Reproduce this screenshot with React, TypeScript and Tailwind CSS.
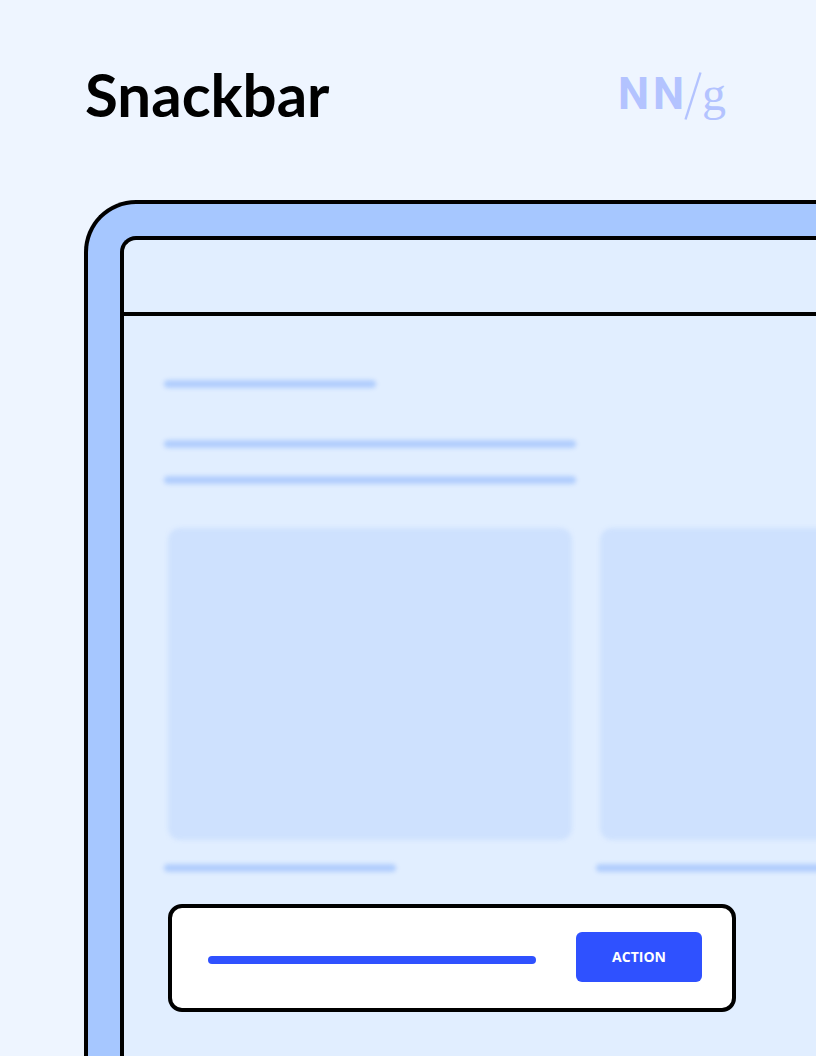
import { clsx } from "clsx";

const CARDS = [
  { id: "first", caption: "max-w-[232px]" },
  { id: "second", caption: "max-w-[412px]" },
];

function Line({ className }: { className?: string }) {
  return <div className={clsx("h-2 w-full rounded-full bg-[#b2cefd]", className)} />;
}

function Logo() {
  return (
    <div className="flex items-center text-[#b3c3ff]" aria-label="NN/g">
      <span className="flex gap-1 pb-1 font-['Roboto',sans-serif] text-[44px] leading-none font-bold">
        <span>N</span>
        <span>N</span>
      </span>
      <svg viewBox="0 0 18 48" className="h-12 w-[18px]" fill="none" aria-hidden="true">
        <path d="M1.5 47.5 16.5 .5" stroke="currentColor" strokeWidth="2.4" />
      </svg>
      <span className="pb-1 font-['Liberation_Serif',serif] text-5xl leading-none">g</span>
    </div>
  );
}

function Snackbar() {
  return (
    <div
      role="status"
      className="mx-1 mt-8 flex max-w-[568px] items-start gap-10 rounded-[14px] border-4 border-black bg-white pt-6 pr-[30px] pb-[26px] pl-9"
    >
      <div className="mt-6 h-2 flex-1 rounded-full bg-[#2f51ff]" />
      <button
        type="button"
        className="h-[50px] w-[126px] rounded-md bg-[#2f51ff] font-['Open_Sans',sans-serif] text-sm font-bold text-white"
      >
        ACTION
      </button>
    </div>
  );
}

export default function App() {
  return (
    <div className="flex min-h-screen flex-col overflow-hidden bg-[#eef5ff]">
      {/* ── Title ── */}
      <header className="flex h-[200px] items-center justify-between pr-[90px] pb-2 pl-[85px]">
        <h1 className="pb-1 font-['Lato',sans-serif] text-6xl leading-none font-bold text-black">Snackbar</h1>
        <Logo />
      </header>

      {/* ── Device frame, runs off the right and bottom edges ── */}
      <main className="ml-[84px] flex flex-1 flex-col rounded-tl-[52px] border-t-4 border-l-4 border-black bg-[#a6c7ff] pt-8 pl-8">
        <div className="flex flex-1 flex-col overflow-hidden rounded-tl-2xl border-t-4 border-l-4 border-black bg-[#e1eeff]">
          <div className="h-[76px] border-b-4 border-black" />

          <div className="px-10 pt-16 pb-11">
            {/* page content behind the snackbar */}
            <div className="-mr-12 blur-[2px]" aria-hidden="true">
              <Line className="max-w-[212px]" />
              <Line className="mt-[52px] max-w-[412px]" />
              <Line className="mt-7 max-w-[412px]" />
              <div className="mt-11 grid grid-cols-[412px_412px] gap-5">
                {CARDS.map(({ id, caption }) => (
                  <div key={id}>
                    <div className="mx-1 h-[312px] rounded-xl bg-[#cee1fe]" />
                    <Line className={clsx("mt-6", caption)} />
                  </div>
                ))}
              </div>
            </div>

            <Snackbar />
          </div>
        </div>
      </main>
    </div>
  );
}
